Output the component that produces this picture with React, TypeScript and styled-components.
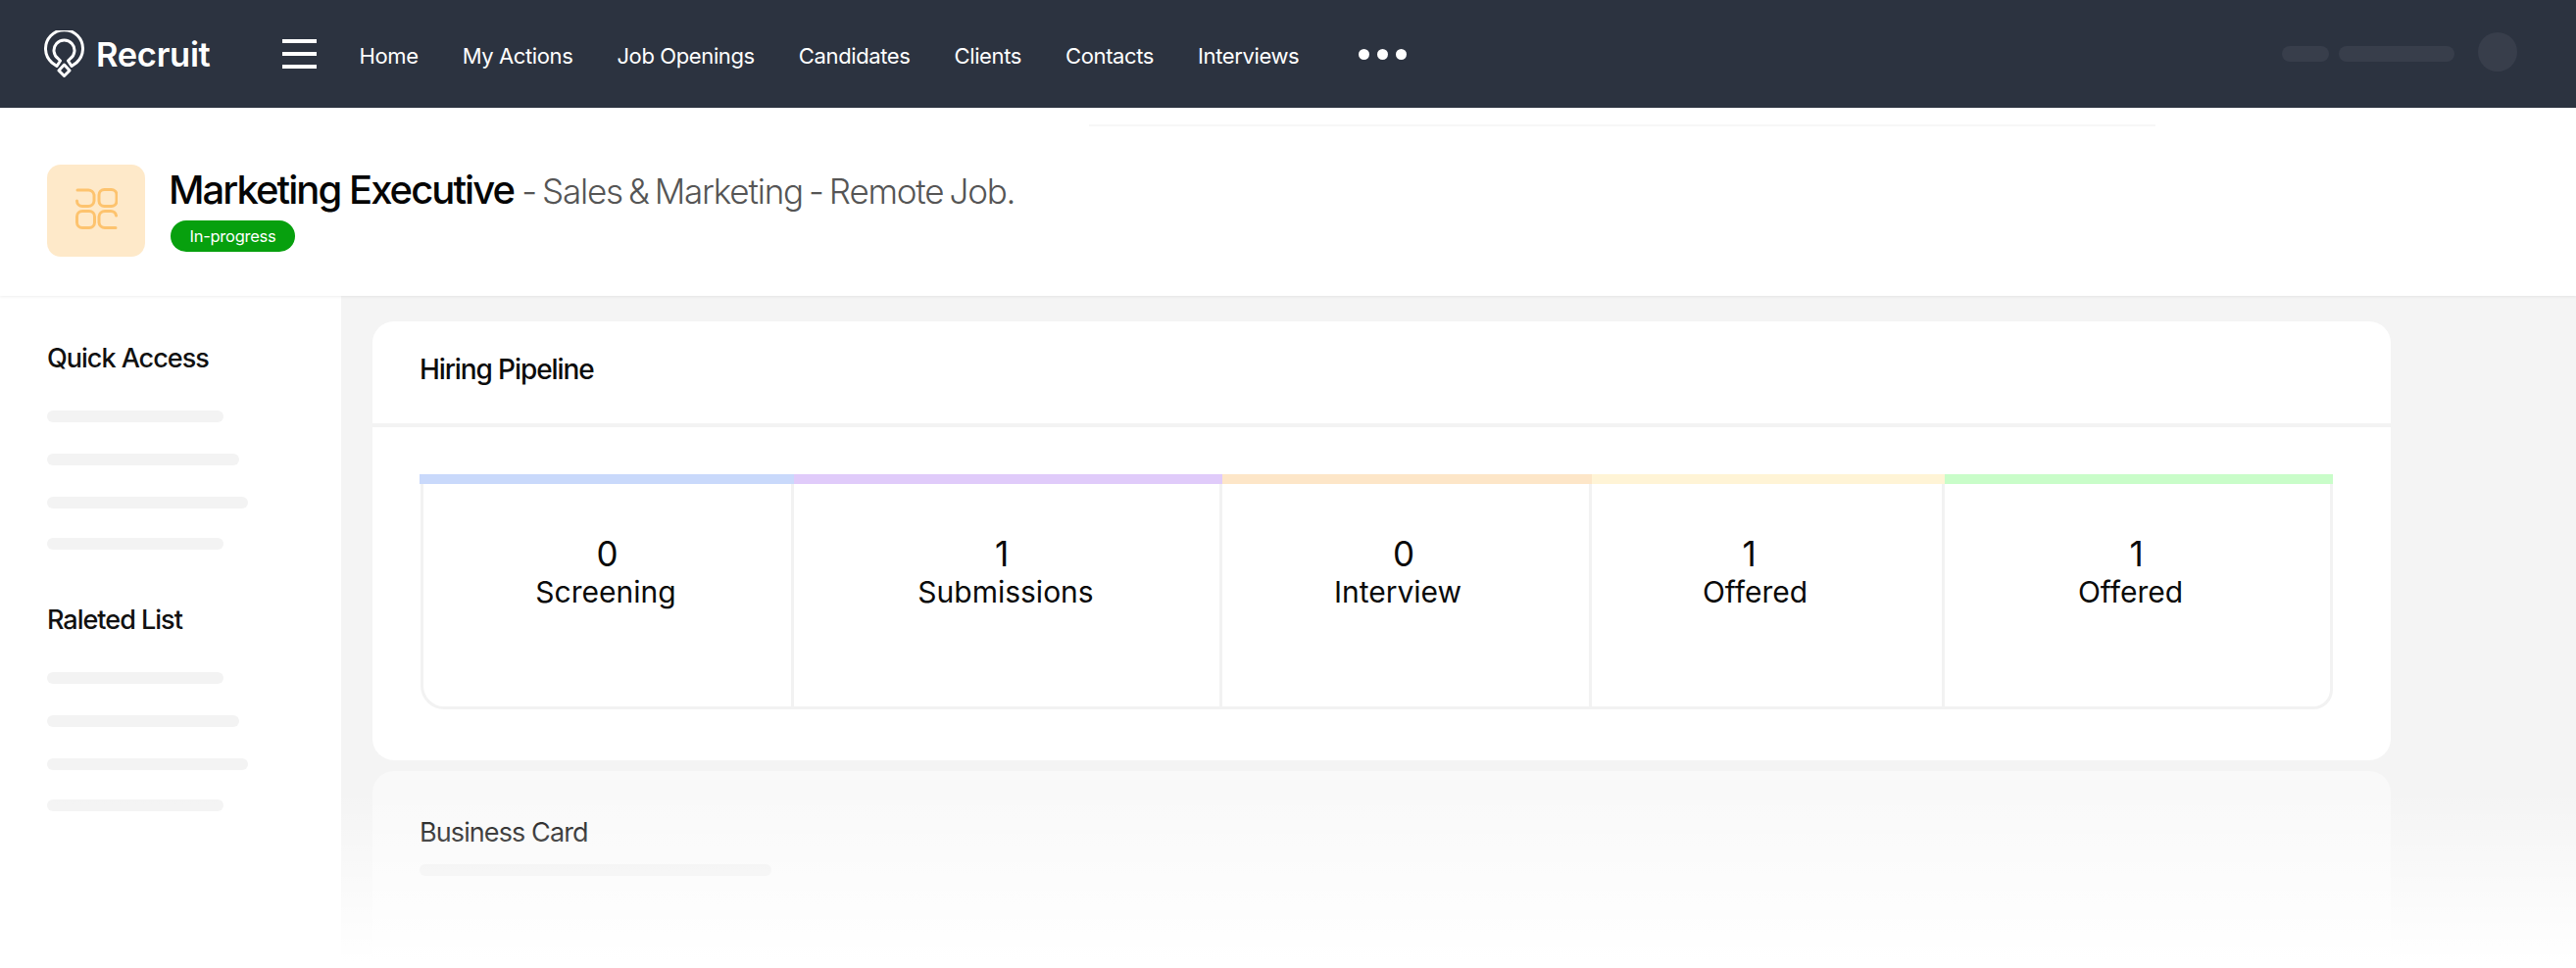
import React from 'react';
import styled, { createGlobalStyle } from 'styled-components';

const GlobalStyle = createGlobalStyle`
  html, body {
    margin: 0;
    padding: 0;
    background: #fff;
    font-family: Inter, "Noto Sans", sans-serif;
    color: #0c0c0c;
  }
  body {
    height: 988px;
    overflow: hidden;
  }
`;

const navItems = ['Home', 'My Actions', 'Job Openings', 'Candidates', 'Clients', 'Contacts', 'Interviews'];

const stages = [
  { count: 0, label: 'Screening', color: '#c9d9fb', width: 382, numShift: 0, labelShift: 3 },
  { count: 1, label: 'Submissions', color: '#e0cbfa', width: 437, numShift: 10, labelShift: 2 },
  { count: 0, label: 'Interview', color: '#fde6c8', width: 377, numShift: 4, labelShift: 16 },
  { count: 1, label: 'Offered', color: '#fff4d6', width: 360, numShift: 36, labelShift: 24 },
  { count: 1, label: 'Offered', color: '#c9fdc9', width: 396, numShift: 2, labelShift: 14 },
];

const App: React.FC = () => {
  return (
    <>
      <GlobalStyle />
      <Page>
        <Header>
          <Brand>
            <LogoMark />
            <BrandName>Recruit</BrandName>
          </Brand>
          <Burger>
            <span />
            <span />
            <span />
          </Burger>
          <Nav>
            {navItems.map((item) => (
              <NavLink key={item}>{item}</NavLink>
            ))}
          </Nav>
          <MoreDots>
            <span />
            <span />
            <span />
          </MoreDots>
          <UserArea>
            <HeaderPill $w={48} />
            <HeaderPill $w={118} />
            <Avatar />
          </UserArea>
        </Header>

        <TitleSection>
          <FaintLine />
          <TitleRow>
            <JobIcon>
              <AppsGlyph />
            </JobIcon>
            <div>
              <JobTitle>
                Marketing Executive<JobSub> - Sales &amp; Marketing - Remote Job.</JobSub>
              </JobTitle>
              <StatusBadge>In-progress</StatusBadge>
            </div>
          </TitleRow>
        </TitleSection>

        <Body>
          <Sidebar>
            <SideTitle>Quick Access</SideTitle>
            <SkeletonList>
              <Skeleton $w={180} />
              <Skeleton $w={196} />
              <Skeleton $w={205} />
              <Skeleton $w={180} />
            </SkeletonList>
            <SideTitle $second>Raleted List</SideTitle>
            <SkeletonList>
              <Skeleton $w={180} />
              <Skeleton $w={196} />
              <Skeleton $w={205} />
              <Skeleton $w={180} />
            </SkeletonList>
          </Sidebar>

          <Main>
            <Card>
              <CardHeader>Hiring Pipeline</CardHeader>
              <CardBody>
                <Pipeline>
                  {stages.map((stage, index) => (
                    <Stage key={index} style={{ width: stage.width }}>
                      <StageBar $color={stage.color} />
                      <StageCell $first={index === 0} $last={index === stages.length - 1}>
                        <StageCount style={{ marginRight: stage.numShift }}>{stage.count}</StageCount>
                        <StageLabel style={{ marginRight: stage.labelShift }}>{stage.label}</StageLabel>
                      </StageCell>
                    </Stage>
                  ))}
                </Pipeline>
              </CardBody>
            </Card>

            <FadedCard>
              <FadedTitle>Business Card</FadedTitle>
              <FadedSkeleton />
            </FadedCard>
          </Main>
        </Body>

        <BottomFade />
      </Page>
    </>
  );
};

export default App;

const LogoMark = () => (
  <svg width="41" height="48" viewBox="0 0 41 48" fill="none" stroke="#fff" strokeWidth="3" strokeLinejoin="round">
    <path d="M13 36.5 L8 33 A19 19 0 1 1 33 33 L28 36.5 L24.5 31 L26.5 29 A10.5 10.5 0 1 0 14.5 29 L16.5 31 Z" />
    <path d="M20.5 35 L26 41 L20.5 46.5 L15 41 Z" />
  </svg>
);

const AppsGlyph = () => (
  <svg width="43" height="42" viewBox="0 0 43 42" fill="none" stroke="#fdc36e" strokeWidth="3" strokeLinecap="round">
    <path d="M2 2 H13 A6 6 0 0 1 19 7 V13 A6 6 0 0 1 13 18.5 H7 A5.5 5.5 0 0 1 1.5 13" />
    <rect x="24" y="1.5" width="18" height="17" rx="5.5" />
    <rect x="1.5" y="23.5" width="18" height="17" rx="5.5" />
    <path d="M41.5 28 A5.5 5.5 0 0 0 36 23.5 H30 A6 6 0 0 0 24 29 V35 A6 6 0 0 0 30 40.5 H41" />
  </svg>
);

// Styled components
const Page = styled.div`
  position: relative;
  width: 2628px;
  height: 988px;
  overflow: hidden;
  background: #fff;
`;

const Header = styled.header`
  display: flex;
  align-items: center;
  height: 110px;
  padding-left: 45px;
  background: #2c3340;
  color: #fff;
`;

const Brand = styled.div`
  display: flex;
  align-items: center;
  gap: 12px;
`;

const BrandName = styled.span`
  font-size: 34.5px;
  font-weight: 600;
  letter-spacing: -0.3px;
`;

const Burger = styled.div`
  display: flex;
  flex-direction: column;
  gap: 9px;
  margin-left: 73px;

  span {
    display: block;
    width: 35px;
    height: 4px;
    background: #fff;
  }
`;

const Nav = styled.nav`
  display: flex;
  gap: 45px;
  margin-left: 44px;
  padding-top: 4px;
`;

const NavLink = styled.a`
  font-size: 22px;
  line-height: 30px;
  letter-spacing: -0.38px;
  color: #fff;
  white-space: nowrap;
`;

const MoreDots = styled.div`
  display: flex;
  gap: 8px;
  margin-left: 61px;

  span {
    width: 11px;
    height: 11px;
    border-radius: 50%;
    background: #fff;
  }
`;

const UserArea = styled.div`
  display: flex;
  align-items: center;
  margin-left: auto;
  padding-right: 60px;
`;

const HeaderPill = styled.div<{ $w: number }>`
  width: ${(p) => p.$w}px;
  height: 16px;
  margin-right: 10px;
  border-radius: 8px;
  background: #383e4b;
`;

const Avatar = styled.div`
  width: 40px;
  height: 40px;
  margin-left: 14px;
  margin-bottom: 5px;
  border-radius: 50%;
  background: #383e4b;
`;

const TitleSection = styled.section`
  position: relative;
  height: 192px;
  box-sizing: border-box;
  padding-top: 17px;
  background: #fff;
  box-shadow: 0 1px 3px rgba(0, 0, 0, 0.07);
`;

const FaintLine = styled.div`
  width: 1088px;
  height: 2px;
  margin-left: 1111px;
  background: #f7f7f7;
`;

const TitleRow = styled.div`
  display: flex;
  gap: 24px;
  margin-top: 39px;
  padding-left: 48px;
`;

const JobIcon = styled.div`
  display: flex;
  align-items: center;
  justify-content: center;
  width: 100px;
  height: 94px;
  padding-bottom: 4px;
  box-sizing: border-box;
  border-radius: 14px;
  background: #fee9c9;
`;

const JobTitle = styled.h1`
  margin: 1px 0 0;
  font-size: 40px;
  line-height: 50px;
  font-weight: 500;
  letter-spacing: -1.95px;
  color: #050505;
  white-space: nowrap;
`;

const JobSub = styled.span`
  margin-left: 2px;
  font-size: 35px;
  font-weight: 300;
  letter-spacing: -1.2px;
  word-spacing: -2.5px;
  color: #555;
`;

const StatusBadge = styled.div`
  display: inline-flex;
  align-items: center;
  justify-content: center;
  width: 127px;
  height: 32px;
  margin: 5px 0 0 2px;
  border-radius: 16px;
  background: #07a00e;
  color: #fff;
  font-size: 16.5px;
  letter-spacing: -0.25px;
`;

const Body = styled.div`
  display: flex;
  height: 686px;
`;

const Sidebar = styled.aside`
  width: 348px;
  flex: none;
  box-sizing: border-box;
  padding: 47px 0 0 48px;
`;

const SideTitle = styled.h3<{ $second?: boolean }>`
  margin: ${(p) => (p.$second ? '55px 0 36px' : '0 0 36px')};
  font-size: 27px;
  line-height: 34px;
  font-weight: 500;
  letter-spacing: -1px;
  color: #111;
`;

const SkeletonList = styled.div`
  display: flex;
  flex-direction: column;
  gap: 32px;
`;

const Skeleton = styled.div<{ $w: number }>`
  width: ${(p) => p.$w}px;
  height: 12px;
  border-radius: 6px;
  background: #f3f3f3;

  &:last-child {
    margin-top: -2px;
  }
`;

const Main = styled.main`
  flex: 1;
  box-sizing: border-box;
  padding: 26px 189px 0 32px;
  background: #f4f4f4;
`;

const Card = styled.div`
  height: 448px;
  border-radius: 22px;
  background: #fff;
`;

const CardHeader = styled.div`
  display: flex;
  align-items: center;
  height: 98px;
  padding: 0 48px 6px;
  border-bottom: 4px solid #f3f3f3;
  font-size: 28px;
  font-weight: 500;
  letter-spacing: -1.1px;
  color: #0c0c0c;
`;

const CardBody = styled.div`
  padding: 48px 59px 0 48px;
`;

const Pipeline = styled.div`
  display: flex;
`;

const Stage = styled.div`
  flex: none;
`;

const StageBar = styled.div<{ $color: string }>`
  height: 10px;
  background: ${(p) => p.$color};
`;

const StageCell = styled.div<{ $first?: boolean; $last?: boolean }>`
  display: flex;
  flex-direction: column;
  align-items: center;
  height: 230px;
  box-sizing: border-box;
  margin-left: ${(p) => (p.$first ? '1px' : '0')};
  padding-top: 51px;
  border-right: 3px solid #f2f2f2;
  border-bottom: 3px solid #f2f2f2;
  border-left: ${(p) => (p.$first ? '3px solid #f2f2f2' : 'none')};
  border-bottom-left-radius: ${(p) => (p.$first ? '24px' : '0')};
  border-bottom-right-radius: ${(p) => (p.$last ? '20px' : '0')};
`;

const StageCount = styled.div`
  font-size: 35px;
  line-height: 40px;
  color: #0a0a0a;
`;

const StageLabel = styled.div`
  font-size: 30px;
  line-height: 38px;
  color: #0a0a0a;
`;

const FadedCard = styled.div`
  height: 260px;
  margin-top: 11px;
  box-sizing: border-box;
  padding: 45px 48px 0;
  border-radius: 22px;
  background: #f9f9f9;
`;

const FadedTitle = styled.div`
  font-size: 27px;
  line-height: 36px;
  letter-spacing: -0.9px;
  color: #000;
`;

const FadedSkeleton = styled.div`
  width: 359px;
  height: 12px;
  margin-top: 14px;
  border-radius: 6px;
  background: #eeeeee;
`;

const BottomFade = styled.div`
  position: absolute;
  left: 0;
  right: 0;
  bottom: 0;
  height: 201px;
  background: linear-gradient(to bottom, rgba(255, 255, 255, 0) 10%, #fff 97%);
  pointer-events: none;
`;
